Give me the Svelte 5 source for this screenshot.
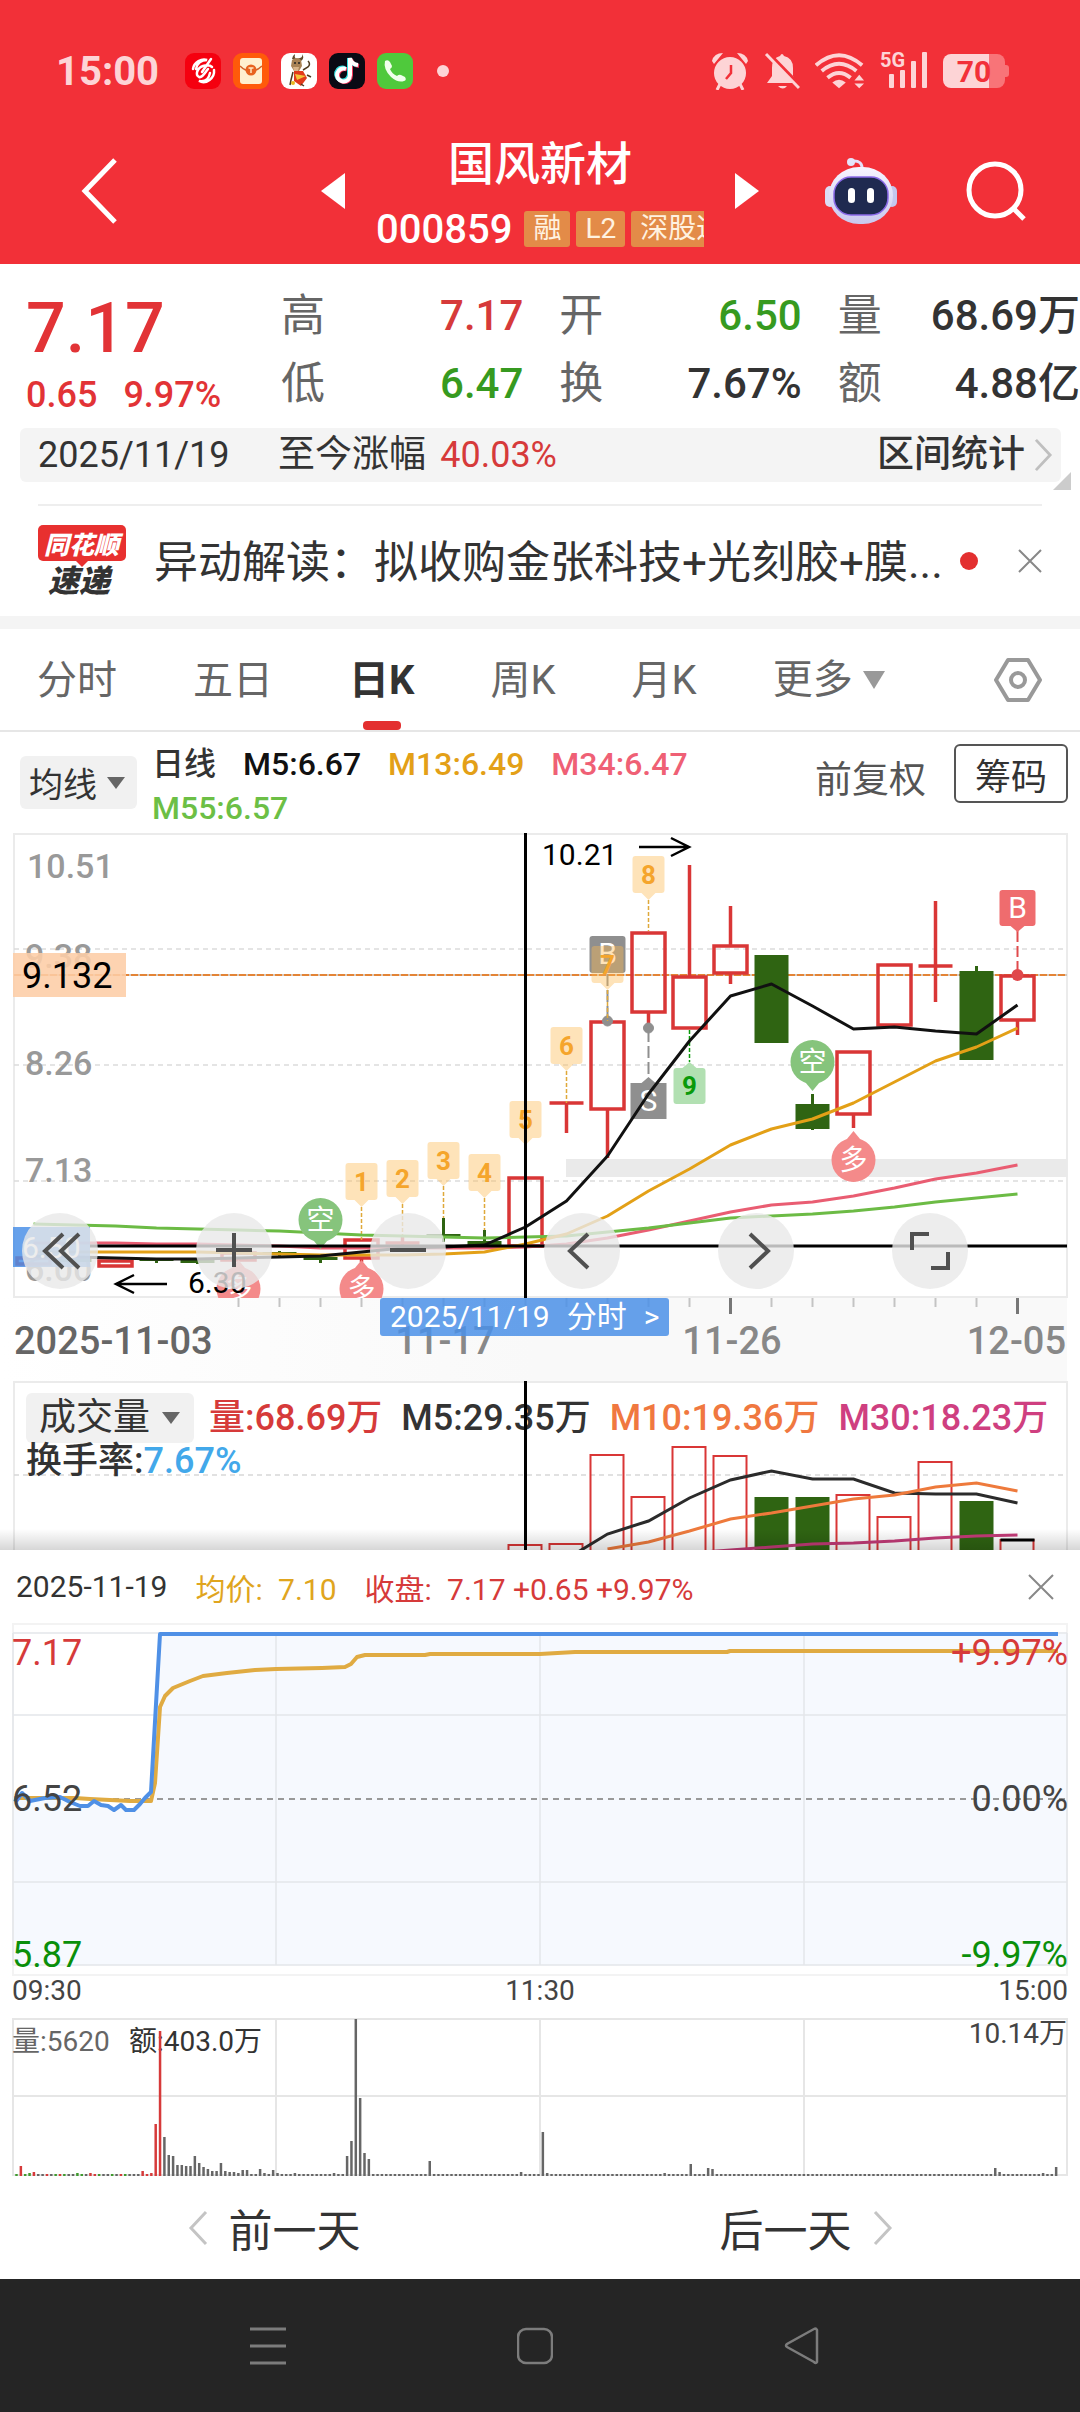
<script>
  const quotes = [
    { label: '高', value: '7.17', tone: 'up' },
    { label: '开', value: '6.50', tone: 'down' },
    { label: '量', value: '68.69万', tone: '' },
    { label: '低', value: '6.47', tone: 'down' },
    { label: '换', value: '7.67%', tone: '' },
    { label: '额', value: '4.88亿', tone: '' }
  ];

  const tabs = ['分时', '五日', '日K', '周K', '月K'];
  let activeTab = $state('日K');

  // Horizontal centre of the candle that is k days from the selected one.
  const cx = (k) => 525.5 + 41 * k;
  const join = (pts) => pts.map((p) => p.join(',')).join(' ');
  const series = (from, ys) => join(ys.map((y, i) => [cx(from + i), y]));

  // k: day offset, t/b: body top and bottom, h/l: wick ends
  const candles = [
    { k: -12, up: true, t: 1258, b: 1264, h: 1258, l: 1264 },
    { k: -11, up: false, t: 1259, b: 1262, h: 1259, l: 1262 },
    { k: -10, up: true, t: 1261, b: 1266, h: 1261, l: 1266 },
    { k: -9, up: false, t: 1259, b: 1261, h: 1259, l: 1263 },
    { k: -8, up: false, t: 1260, b: 1263, h: 1259, l: 1264 },
    { k: -7, up: true, t: 1253, b: 1260, h: 1253, l: 1260 },
    { k: -6, up: false, t: 1252, b: 1254, h: 1251, l: 1256 },
    { k: -5, up: false, t: 1257, b: 1260, h: 1255, l: 1263 },
    { k: -4, up: true, t: 1240, b: 1258, h: 1240, l: 1262 },
    { k: -3, up: true, t: 1243, b: 1246, h: 1237, l: 1246 },
    { k: -2, up: false, t: 1234, b: 1236, h: 1218, l: 1242 },
    { k: -1, up: false, t: 1241, b: 1245, h: 1230, l: 1245 },
    { k: 0, up: true, t: 1178, b: 1246, h: 1178, l: 1246 },
    { k: 1, up: true, t: 1103, b: 1103, h: 1103, l: 1133 },
    { k: 2, up: true, t: 1022, b: 1109, h: 1022, l: 1158 },
    { k: 3, up: true, t: 933, b: 1012, h: 933, l: 1027 },
    { k: 4, up: true, t: 977, b: 1028, h: 865, l: 1028 },
    { k: 5, up: true, t: 946, b: 973, h: 906, l: 984 },
    { k: 6, up: false, t: 955, b: 1043, h: 955, l: 1043 },
    { k: 7, up: false, t: 1104, b: 1129, h: 1094, l: 1130 },
    { k: 8, up: true, t: 1052, b: 1114, h: 1052, l: 1128 },
    { k: 9, up: true, t: 965, b: 1025, h: 965, l: 1025 },
    { k: 10, up: true, t: 966, b: 966, h: 901, l: 1002 },
    { k: 11, up: false, t: 971, b: 1060, h: 966, l: 1060 },
    { k: 12, up: true, t: 976, b: 1020, h: 976, l: 1035 }
  ];

  const ma5 = series(-12, [1256, 1257, 1258, 1259, 1259, 1258, 1257, 1256, 1252, 1248, 1247, 1245, 1227, 1201, 1156, 1094, 1041, 996, 984, 1006, 1029, 1027, 1031, 1034, 1005]);
  const ma13 = series(-12, [1252, 1252, 1252, 1252, 1252, 1253, 1254, 1255, 1255, 1255, 1254, 1252, 1244, 1234, 1216, 1191, 1169, 1145, 1129, 1119, 1103, 1082, 1061, 1047, 1028]);
  const ma34 = series(-12, [1243, 1243, 1243, 1244, 1244, 1245, 1246, 1248, 1248, 1248, 1248, 1248, 1247, 1244, 1238, 1230, 1221, 1212, 1205, 1202, 1196, 1188, 1179, 1173, 1165]);
  const ma55 = series(-12, [1224, 1225, 1226, 1228, 1229, 1230, 1231, 1233, 1235, 1236, 1237, 1238, 1237, 1236, 1232, 1228, 1223, 1218, 1216, 1214, 1211, 1207, 1202, 1198, 1194]);

  const counts = [
    { n: 1, k: -4, y: 1163, end: 1240 },
    { n: 2, k: -3, y: 1160, end: 1237 },
    { n: 3, k: -2, y: 1142, end: 1218 },
    { n: 4, k: -1, y: 1154, end: 1230 },
    { n: 5, k: 0, y: 1101, end: 1177 },
    { n: 6, k: 1, y: 1027, end: 1103 },
    { n: 7, k: 2, y: 946, end: 1021 },
    { n: 8, k: 3, y: 856, end: 931 }
  ];
  const longs = [{ k: -7, y: 1289 }, { k: -4, y: 1289 }, { k: 8, y: 1160 }];
  const shorts = [{ k: -5, y: 1220 }, { k: 7, y: 1062 }];
  const scale = [['10.51', 878, 27], ['9.38', 968, 25], ['8.26', 1075, 25], ['7.13', 1182, 25], ['6.00', 1281, 25]];

  const volumes = [
    [0, 1545, 1], [1, 1544, 1], [2, 1455, 1], [3, 1497, 1], [4, 1447, 1], [5, 1456, 1], [6, 1497, 0],
    [7, 1497, 0], [8, 1495, 1], [9, 1517, 1], [10, 1462, 1], [11, 1501, 0], [12, 1540, 1]
  ];
  const vol5 = series(1, [1559, 1534, 1521, 1498, 1480, 1471, 1479, 1479, 1493, 1494, 1494, 1503]);
  const vol10 = series(2, [1549, 1542, 1531, 1519, 1513, 1506, 1499, 1495, 1487, 1483, 1491]);
  const vol30 = series(4, [1553, 1550, 1547, 1544, 1543, 1541, 1538, 1536, 1535]);

  const price = join([
    [14, 1799], [17, 1800], [22, 1793], [30, 1801], [45, 1798], [60, 1797], [70, 1802], [80, 1806], [88, 1806],
    [94, 1801], [101, 1805], [108, 1806], [114, 1810], [121, 1805], [126, 1810], [134, 1810], [140, 1804],
    [145, 1798], [151, 1792], [160, 1634], [1058, 1634]
  ]);
  const average = join([
    [14, 1798], [75, 1798], [90, 1799], [110, 1800], [130, 1801], [151, 1801], [155, 1783], [160, 1707],
    [165, 1696], [173, 1688], [190, 1681], [203, 1676], [227, 1673], [255, 1670], [276, 1669], [322, 1668],
    [345, 1667], [351, 1664], [357, 1657], [365, 1655], [425, 1655], [430, 1654], [540, 1654], [575, 1652],
    [727, 1652], [730, 1651], [1058, 1651]
  ]);

  // Minute volumes; every minute without an entry trades at the floor height.
  const peaks = {
    1: 10, 3: 3, 4: 4, 14: 3, 17: 3, 29: 5, 31: 3, 32: 52, 33: 145, 34: 39, 35: 21, 36: 20, 37: 11, 38: 11, 39: 10,
    40: 10, 41: 20, 42: 13, 43: 9, 44: 7, 45: 5, 46: 5, 47: 13, 48: 5, 49: 4, 50: 4, 51: 3, 52: 6, 53: 6, 56: 7,
    57: 3, 59: 6, 60: 3, 64: 3, 73: 3, 76: 20, 77: 35, 78: 157, 79: 78, 80: 23, 81: 17, 95: 15, 116: 4, 121: 44,
    122: 3, 149: 3, 155: 12, 159: 8, 160: 7, 225: 8, 226: 4, 236: 3, 239: 9
  };
  const reds = [1, 4, 7, 10, 17, 18, 24, 29, 30, 31, 32, 33];
  const greens = [0, 2, 3, 9, 11, 14, 15, 19, 22, 25];
  const minutes = Array.from({ length: 240 }, (_, i) => ({
    x: 16.5 + 4.35 * i,
    h: peaks[i] ?? 2,
    color: reds.includes(i) ? '#d63a3a' : greens.includes(i) ? '#3f9a2e' : '#666'
  }));
</script>

{#snippet chevron(dir, w, h, color, sw)}
  <svg class="icon" width={w} height={h} viewBox="0 0 20 36" aria-hidden="true">
    <path d={dir === 'left' ? 'M18 2 3 18l15 16' : 'M2 2l15 16L2 34'} fill="none" stroke={color} stroke-width={sw} />
  </svg>
{/snippet}

<div class="page">
  <header>
    <div class="status">
      <span class="clock">15:00</span>
      <div class="apps">
        <svg viewBox="0 0 36 36"><rect width="36" height="36" rx="9" fill="#f5000f" /><path d="M27 14c-2-2-6-2-9-1-6 2-8 9-4 11 3 1 5-3 9-8M8 16C9 9 17 5 22 7c-6 0-10 4-11 9M29 17c1 8-8 15-15 11 8 1 10-3 11-8M26 6 17 19" fill="none" stroke="#fff" stroke-width="2.500" stroke-linecap="round" /></svg>
        <svg viewBox="0 0 36 36"><rect width="36" height="36" rx="9" fill="#ff5a0a" /><rect x="7" y="5" width="22" height="26" rx="3" fill="#fff0cf" /><path d="M7 13q5 5 11 5t11-5" fill="none" stroke="#d2622a" stroke-width="1.5" /><circle cx="18" cy="17" r="5.5" fill="#e8631f" /><path d="M15.500 15h5M18 15v5" stroke="#ffe6c0" stroke-width="1.500" /></svg>
        <svg viewBox="0 0 36 36"><rect width="36" height="36" rx="9" fill="#fff" /><path d="M11 6q0-3 3-5-1 3 1 5l4-1q3-1 2-4 3 4-1 7z" fill="#5f4a2c" /><path d="M11 7q5-4 9 0l1 6-3 5h-5l-3-5z" fill="#a88255" /><path d="M12 14h6l-1 4h-4z" fill="#d8b48a" /><circle cx="14" cy="10" r="1" fill="#222" /><circle cx="18" cy="10" r="1" fill="#222" /><path d="M13 18h9l4 7-6 8-7-5z" fill="#e23a1c" /><path d="M14 21l11 2-9 4z" fill="#f5c53a" /><path d="M22 17l5-3q3-3 0-6M12 19l-2 8-1 5M26 22l4 2M20 31l3 2" stroke="#4d3a20" stroke-width="1.500" fill="none" /><circle cx="12" cy="30" r="2" fill="#e8b820" /></svg>
        <svg viewBox="0 0 36 36"><rect width="36" height="36" rx="9" fill="#0a0a14" /><g fill="none" stroke-width="4"><path d="M18 16.500a6.500 6.500 0 1 0 4 6V6q1 6 8 7" stroke="#f2345a" /><path d="M16 15a6.500 6.500 0 1 0 4 6V5q1 6 8 7" stroke="#35dfe0" /><path d="M17 16a6.500 6.500 0 1 0 4 6V5q1 6 8 7" stroke="#fff" /></g></svg>
        <svg viewBox="0 0 36 36"><rect width="36" height="36" rx="9" fill="#4fc93c" /><path d="M8 8q3-2 5 1l2 4q0 2-2 3 2 5 7 7 2-2 4-1l4 2q2 3-1 4-6 2-13-4Q6 16 8 8z" fill="#f0ffec" /></svg>
      </div>
      <i class="more-dot"></i>
      <div class="signals">
        <svg class="alarm" viewBox="0 0 38 38"><g fill="#fdd4d6"><circle cx="19" cy="21" r="16" /><path d="M1 9Q3 1 12 1L3 12zM37 9Q35 1 26 1l9 11z" /><path d="M9 32l-3 6M29 32l3 6" stroke="#fdd4d6" stroke-width="3" /></g><path d="M20 13v8l-5 6" fill="none" stroke="#f23038" stroke-width="2.500" /></svg>
        <svg class="bell" viewBox="0 0 36 38"><path d="M16 4q2-4 4 0 9 2 9 12v8l4 7H3l5-7v-8Q8 6 16 4zM14 34h9q-4 5-9 0z" fill="#fdd4d6" /><path d="M4 1l33 34" stroke="#f23038" stroke-width="4" /><path d="M2 2l33 34" stroke="#fdd4d6" stroke-width="3" /></svg>
        <svg class="wifi" viewBox="0 0 52 38"><g fill="none" stroke="#fdd4d6" stroke-width="4"><path d="M1 13q24-21 48 0M7 19q18-15 36 0M13 26q12-10 24 0" /></g><path d="M18 31q7-6 14 0l-7 6z" fill="#fdd4d6" /><path d="M46 23l5 6H41zM46 37l5-5H41z" fill="#fdd4d6" /></svg>
        <div class="cell">
          <small>5G</small>
          <svg viewBox="0 0 40 36"><g fill="#fdd4d6"><rect x="0" y="22" width="5" height="14" rx="1" /><rect x="11" y="18" width="5" height="18" rx="1" /><rect x="22" y="9" width="5" height="27" rx="1" /><rect x="33" y="0" width="5" height="36" rx="1" /></g></svg>
        </div>
        <span class="battery">70</span>
      </div>
    </div>

    <div class="topbar">
      <button class="back" aria-label="返回"><svg class="icon" width="36" height="66" viewBox="0 0 36 66"><path d="M34 2 4 33l30 31" fill="none" stroke="#fff" stroke-width="5" /></svg></button>
      <div class="switcher">
        <button aria-label="上一只"><svg class="icon" width="24" height="36" viewBox="0 0 24 36"><path d="M24 0v36L0 18z" fill="#fff" /></svg></button>
        <div class="stock">
          <h1>国风新材</h1>
          <div class="code"><b>000859</b><span>融</span><span>L2</span><span>深股通</span></div>
        </div>
        <button aria-label="下一只"><svg class="icon" width="24" height="36" viewBox="0 0 24 36"><path d="M0 0v36l24-18z" fill="#fff" /></svg></button>
      </div>
      <div class="tools">
        <button aria-label="智能助手">
          <svg class="icon" width="72" height="68" viewBox="0 0 72 68"><defs><linearGradient id="shell" x1="0" y1="0" x2="0" y2="1"><stop offset="0" stop-color="#f7f4ff" /><stop offset="1" stop-color="#c9c8ee" /></linearGradient></defs><path d="M27 4q11-1 10 9" fill="none" stroke="#e4e0fa" stroke-width="3" /><circle cx="26" cy="5" r="4" fill="#e4e4fa" /><rect x="0" y="29" width="10" height="21" rx="5" fill="#dcdcf5" /><rect x="62" y="29" width="10" height="21" rx="5" fill="#c4c6ee" /><rect x="4" y="10" width="64" height="57" rx="30" fill="url(#shell)" /><rect x="9" y="20" width="54" height="38" rx="17" fill="#1f2a50" stroke="#8a6ae8" stroke-width="1.500" /><rect x="23" y="31" width="7" height="15" rx="3.500" fill="#fff" /><rect x="42" y="31" width="7" height="15" rx="3.500" fill="#fff" /></svg>
        </button>
        <button aria-label="搜索"><svg class="icon" width="60" height="60" viewBox="0 0 60 60"><circle cx="29" cy="29" r="26" fill="none" stroke="#fff" stroke-width="5" /><path d="M47 47l11 11" stroke="#fff" stroke-width="5" /></svg></button>
      </div>
    </div>
  </header>

  <section class="quote">
    <div class="last">
      <strong>7.17</strong>
      <p><span>0.65</span><span>9.97%</span></p>
    </div>
    <dl>
      {#each quotes as q}
        <div><dt>{q.label}</dt><dd class={q.tone}>{q.value}</dd></div>
      {/each}
    </dl>
  </section>

  <div class="since">
    <span class="day">2025/11/19</span>
    <span>至今涨幅 <em>40.03%</em></span>
    <a href="#range">区间统计{@render chevron('right', 19, 34, '#bfbfbf', 3)}</a>
  </div>

  <section class="news">
    <div class="logo"><b>同花顺</b><i>速递</i></div>
    <a href="#news">异动解读：拟收购金张科技+光刻胶+膜...</a>
    <span class="unread"></span>
    <button aria-label="关闭"><svg class="icon" width="24" height="24" viewBox="0 0 24 24"><path d="M1 1l22 22M23 1L1 23" stroke="#888" stroke-width="2" /></svg></button>
  </section>

  <nav class="tabs">
    {#each tabs as t}
      <button class:active={t === activeTab} onclick={() => (activeTab = t)}>{t}</button>
    {/each}
    <button class="more">更多<svg class="icon" width="22" height="18" viewBox="0 0 22 18"><path d="M0 0h22L11 18z" fill="#999" /></svg></button>
    <button class="gear" aria-label="设置"><svg class="icon" width="48" height="46" viewBox="0 0 48 46"><path d="M14 3h20l12 20-12 20H14L2 23z" fill="none" stroke="#999" stroke-width="4" stroke-linejoin="round" /><circle cx="24" cy="23" r="7" fill="none" stroke="#999" stroke-width="4" /></svg></button>
  </nav>

  <section class="indicator">
    <button class="pick">均线<svg class="icon" width="18" height="12" viewBox="0 0 18 12"><path d="M0 0h18L9 12z" fill="#666" /></svg></button>
    <div class="legend">
      <span class="name">日线</span><span class="k">M5:6.67</span><span class="o">M13:6.49</span><span class="p">M34:6.47</span><span class="g">M55:6.57</span>
    </div>
    <button class="adjust">前复权</button>
    <button class="chips">筹码</button>
  </section>

  <section class="kline">
    <svg class="chart" viewBox="0 833 1080 548" role="img" aria-label="日K线图">
      <defs>
        <clipPath id="frame"><rect x="13" y="833" width="1055" height="465" /></clipPath>
        <linearGradient id="haze"><stop offset="0" stop-color="#fff" /><stop offset="0.500" stop-color="#f9f9f9" /></linearGradient>
      </defs>
      <rect x="0" y="1298" width="1067" height="83" fill="url(#haze)" />
      <rect x="14" y="834" width="1053" height="463" fill="#fff" stroke="#ebebeb" stroke-width="2" />
      <g stroke="#dcdcdc" stroke-width="1.500" stroke-dasharray="5 4"><path d="M14 949h1053M14 1065h1053M14 1181h1053" /></g>
      <g class="axis">
        {#each scale as [t, y, x]}<text {x} {y}>{t}</text>{/each}
      </g>
      <rect x="566" y="1159" width="501" height="18" fill="#eaeaea" />
      <path d="M14 975h1053" stroke="#c9b8a8" stroke-width="1.500" />
      <path d="M14 975h1053" stroke="#e38436" stroke-width="2" stroke-dasharray="7 2" />
      <g clip-path="url(#frame)">
        {#each candles as c}
          {#if c.up}
            <g fill="none" stroke="#d93636" stroke-width="3.500">
              {#if c.b - c.t < 4}
                <path d="M{cx(c.k) - 17} {c.t}h34" />
                <path d="M{cx(c.k)} {c.h}V{c.l}" />
              {:else}
                <rect x={cx(c.k) - 16.5} y={c.t} width="33" height={c.b - c.t} />
                <path d="M{cx(c.k)} {c.h}V{c.t}M{cx(c.k)} {c.b}V{c.l}" />
              {/if}
            </g>
          {:else}
            <rect x={cx(c.k) - 17} y={c.t} width="34" height={c.b - c.t} fill="#2f6412" />
            <path d="M{cx(c.k)} {c.h}V{c.l}" stroke="#2f6412" stroke-width="3" />
          {/if}
        {/each}

        <g stroke="#8f8f8f" fill="#8f8f8f">
          <path d="M{cx(2)} 974v46M{cx(3)} 1030v48" fill="none" stroke-width="2" stroke-dasharray="12 4" />
          <circle cx={cx(2)} cy="1021" r="5" /><circle cx={cx(3)} cy="1028" r="5" />
        </g>
        <g class="trade">
          <rect x={cx(2) - 18} y="936" width="36" height="37" rx="3" fill="#8f8f8f" /><text x={cx(2)} y="964">B</text>
          <path d="M{cx(3) - 18} 1083h11l7-6 7 6h11v36h-36z" fill="#8f8f8f" /><text x={cx(3)} y="1111">S</text>
        </g>
        {#each counts as c}
          <path d="M{cx(c.k)} {c.y + 44}V{c.end}" stroke="#dfa93a" stroke-width="1.500" stroke-dasharray="4 2" />
          <g class="count">
            <path d="M{cx(c.k) - 13} {c.y}h26q3 0 3 3v31q0 3-3 3h-6l-7 7-7-7h-6q-3 0-3-3v-31q0-3 3-3z" fill="#fdb850" fill-opacity="0.4" />
            <text x={cx(c.k)} y={c.y + 28}>{c.n}</text>
          </g>
        {/each}
        <path d="M{cx(4)} 1030v32" stroke="#0a9a0a" stroke-width="1.500" stroke-dasharray="4 2" />
        <g class="count nine"><path d="M{cx(4) - 13} 1068h6l7-6 7 6h6q3 0 3 3v30q0 3-3 3h-26q-3 0-3-3v-30q0-3 3-3z" fill="#b2e0b2" /><text x={cx(4)} y="1095">9</text></g>

        <g fill="none" stroke-width="3" stroke-linejoin="round">
          <polyline points={ma34} stroke="#e95d72" /><polyline points={ma55} stroke="#6cbb45" />
          <polyline points={ma13} stroke="#e3a017" /><polyline points={ma5} stroke="#111" />
        </g>

        <path d="M{cx(12)} 931v40" stroke="#e04a4c" stroke-width="2" stroke-dasharray="11 4" />
        <circle cx={cx(12)} cy="975" r="6" fill="#e0484b" />
        <g class="trade"><path d="M{cx(12) - 15} 890h30q3 0 3 3v30q0 3-3 3h-8l-7 6-7-6h-8q-3 0-3-3v-30q0-3 3-3z" fill="#ef6c6e" /><text x={cx(12)} y="918">B</text></g>

        <g class="flag">
          {#each shorts as s}
            <path d="M{cx(s.k) - 9} {s.y + 18}h18l-9 11z" fill="#86c47c" /><circle cx={cx(s.k)} cy={s.y} r="22" fill="#86c47c" /><text x={cx(s.k)} y={s.y + 10}>空</text>
          {/each}
          {#each longs as s}
            <path d="M{cx(s.k) - 9} {s.y - 18}h18l-9-11z" fill="#f48a8a" /><circle cx={cx(s.k)} cy={s.y} r="22" fill="#f48a8a" /><text x={cx(s.k)} y={s.y + 10}>多</text>
          {/each}
        </g>
      </g>

      <rect x="13" y="953" width="113" height="44" fill="#fdcda6" fill-opacity="0.88" />
      <text class="price" x="22" y="988">9.132</text>
      <rect x="13" y="1227" width="77" height="40" fill="#4b90e8" fill-opacity="0.85" />
      <text class="note" x="22" y="1258" fill="#fff">6.50</text>
      <path d="M90 1246h977" stroke="#000" stroke-width="3" />
      <path d="M525.5 833v465" stroke="#000" stroke-width="3" />
      <g fill="none" stroke="#000" stroke-width="2.500"><path d="M167 1284h-51m18-9-18 9 18 9M639 847h50m-18-9 18 9-18 9" /></g>
      <text class="note" x="188" y="1293">6.30</text>
      <text class="note" x="542" y="865">10.21</text>

      <g stroke="#c4c4c4" stroke-width="2">
        {#each Array.from({ length: 20 }, (_, i) => i - 7) as k}<path d="M{cx(k)} 1298v9" />{/each}
      </g>
      <path d="M{cx(5)} 1298v16M{cx(12)} 1298v16" stroke="#777" stroke-width="3" />
      <g class="dates">
        <text x="14" y="1354" fill="#666">2025-11-03</text>
        <text x="445" y="1354" text-anchor="middle">11-17</text>
        <text x="732" y="1354" text-anchor="middle">11-26</text>
        <text x="1066" y="1354" text-anchor="end">12-05</text>
      </g>
    </svg>
    <button class="jump"><span>2025/11/19</span><span>分时</span><span>&gt;</span></button>
    <div class="pad">
      <button aria-label="最左"><svg viewBox="0 0 76 76"><path d="M41 21 23 38l18 17M57 21 39 38l18 17" /></svg></button>
      <button aria-label="放大"><svg viewBox="0 0 76 76"><path d="M38 20v34M20 37h36" /></svg></button>
      <button aria-label="缩小"><svg viewBox="0 0 76 76"><path d="M20 37h36" /></svg></button>
      <button aria-label="左移"><svg viewBox="0 0 76 76"><path d="M44 21 26 38l18 17" /></svg></button>
      <button aria-label="右移"><svg viewBox="0 0 76 76"><path d="M32 21l18 17-18 17" /></svg></button>
      <button aria-label="全屏"><svg viewBox="0 0 76 76"><path d="M20 37V21h17M56 39v16H39" /></svg></button>
    </div>
  </section>

  <section class="volume">
    <svg class="chart" viewBox="0 1381 1080 169" role="img" aria-label="成交量">
      <defs><linearGradient id="shade" x1="0" y1="0" x2="0" y2="1"><stop offset="0" stop-color="#000" stop-opacity="0" /><stop offset="1" stop-color="#000" stop-opacity="0.16" /></linearGradient></defs>
      <path d="M14 1560V1382h1053v178" fill="none" stroke="#ebebeb" stroke-width="2" />
      <path d="M14 1475h1053" stroke="#d8d8d8" stroke-width="1.500" stroke-dasharray="5 4" />
      {#each volumes as [k, y, up]}
        {#if up}
          <rect x={cx(k) - 17} {y} width="33" height="120" fill="none" stroke="#d93636" stroke-width="2" />
        {:else}
          <rect x={cx(k) - 17} {y} width="34" height="120" fill="#2f6412" />
        {/if}
      {/each}
      <path d="M{cx(12) - 17} 1540h34" stroke="#000" stroke-width="3" />
      <g fill="none" stroke-width="3">
        <polyline points={vol5} stroke="#2b2b2b" /><polyline points={vol10} stroke="#ee7a3c" /><polyline points={vol30} stroke="#c43b78" />
      </g>
      <rect x="0" y="1529" width="1080" height="21" fill="url(#shade)" />
    </svg>
    <div class="vlegend">
      <div>
        <button class="pick">成交量<svg class="icon" width="18" height="12" viewBox="0 0 18 12"><path d="M0 0h18L9 12z" fill="#666" /></svg></button>
        <span class="up">量:68.69万</span><span>M5:29.35万</span><span class="or">M10:19.36万</span><span class="mg">M30:18.23万</span>
      </div>
      <p>换手率:<span class="bl">7.67%</span></p>
    </div>
    <svg class="chart cross" viewBox="0 1381 1080 169" aria-hidden="true"><path d="M525.5 1381v169" stroke="#000" stroke-width="3" /></svg>
  </section>

  <section class="sheet">
    <div class="sum">
      <span>2025-11-19</span>
      <span class="avg">均价:&ensp;7.10</span>
      <span class="up">收盘:&ensp;7.17 +0.65 +9.97%</span>
      <button aria-label="关闭分时"><svg class="icon" width="26" height="26" viewBox="0 0 26 26"><path d="M1 1l24 24M25 1L1 25" stroke="#888" stroke-width="2" /></svg></button>
    </div>
    <svg class="chart" viewBox="0 1623 1080 395" role="img" aria-label="分时走势">
      <rect x="13" y="1624" width="1054" height="351" fill="none" stroke="#f3f3f3" stroke-width="2" />
      <polygon points="{price} 1066,1634 1066,1965 14,1965" fill="#f6f9fe" />
      <g fill="none" stroke="#e4e6ea" stroke-width="1.500"><path d="M13 1633h1054M13 1715h1054M13 1882h1054M13 1965h1054M276 1633v332M540 1633v332M804 1633v332M13 1633v332M1067 1633v332" /></g>
      <path d="M14 1799h1053" stroke="#999" stroke-width="2" stroke-dasharray="6 5" />
      <g fill="none" stroke-width="4" stroke-linejoin="round"><polyline points={average} stroke="#e0ab42" /><polyline points={price} stroke="#4f90e6" /></g>
      <g class="lab">
        <text x="12" y="1665" fill="#d63a3a">7.17</text><text x="12" y="1811">6.52</text><text x="12" y="1967" fill="#0a8f0a">5.87</text>
        <g text-anchor="end"><text x="1068" y="1665" fill="#d63a3a">+9.97%</text><text x="1068" y="1811">0.00%</text><text x="1068" y="1967" fill="#0a8f0a">-9.97%</text></g>
      </g>
      <g class="time"><text x="12" y="2000">09:30</text><text x="540" y="2000" text-anchor="middle">11:30</text><text x="1068" y="2000" text-anchor="end">15:00</text></g>
    </svg>
    <svg class="chart" viewBox="0 2018 1080 158" role="img" aria-label="分时成交量">
      <g fill="none" stroke="#e6e6e6" stroke-width="2"><path d="M13 2019h1054v156H13zM13 2096h1054M276 2019v156M540 2019v156M804 2019v156" /></g>
      <g class="time">
        <text x="12" y="2051" fill="#666">量:5620</text><text x="129" y="2051" fill="#333">额:403.0万</text>
        <text x="1067" y="2043" text-anchor="end">10.14万</text>
      </g>
      {#each minutes as m}<path d="M{m.x} 2176v-{m.h}" stroke={m.color} stroke-width="2.500" />{/each}
    </svg>
    <div class="days">
      <button>{@render chevron('left', 20, 36, '#c4c4c4', 3)}前一天</button>
      <button>后一天{@render chevron('right', 20, 36, '#c4c4c4', 3)}</button>
    </div>
  </section>

  <footer>
    <button aria-label="菜单"><svg class="icon" width="36" height="38" viewBox="0 0 36 38"><path d="M0 2h36M0 19h36M0 36h36" stroke="#7c7c7c" stroke-width="3" /></svg></button>
    <button aria-label="主页"><svg class="icon" width="36" height="38" viewBox="0 0 36 38"><rect x="1" y="2" width="34" height="34" rx="8" fill="none" stroke="#7c7c7c" stroke-width="2.500" /></svg></button>
    <button aria-label="后退"><svg class="icon" width="36" height="38" viewBox="0 0 36 38"><path d="M33 3v32q-1 2-3 0L3 20q-2-1 0-3L30 2q2-1 3 1z" fill="none" stroke="#7c7c7c" stroke-width="2.500" /></svg></button>
  </footer>
</div>

<style>
  :global(body) { background: #fff; }
  .page {
    font-family: Roboto, 'Noto Sans CJK SC', sans-serif;
    color: #333;
    overflow: hidden;
  }
  button {
    font: inherit;
    color: inherit;
    background: none;
    border: 0;
    padding: 0;
    cursor: pointer;
    flex: none;
  }
  a { color: inherit; text-decoration: none; }
  h1, p, dl, dd { margin: 0; }
  .icon { display: block; flex: none; }
  .chart { display: block; width: 100%; height: auto; }
  .up { color: #d63a3a; }
  .down { color: #369a20; }

  header { background: #f23038; color: #fff; }
  .status {
    display: flex;
    align-items: center;
    height: 126px;
    padding: 8px 75px 0 56px;
    color: #fdd4d6;
  }
  .clock { font-size: 40px; font-weight: 700; width: 129px; }
  .apps { display: flex; gap: 12px; }
  .apps svg { width: 36px; height: 36px; }
  .more-dot { width: 12px; height: 12px; margin-left: 24px; border-radius: 50%; background: #fdd4d6; }
  .signals { display: flex; align-items: center; gap: 15px; margin-left: auto; }
  .alarm { width: 38px; height: 38px; }
  .bell { width: 36px; height: 38px; }
  .wifi { width: 50px; height: 38px; }
  .cell { display: flex; width: 48px; height: 38px; }
  .cell small { font-size: 20px; line-height: 16px; font-weight: 700; width: 9px; }
  .cell svg { width: 40px; height: 36px; flex: none; }
  .battery {
    position: relative;
    width: 62px;
    height: 34px;
    border-radius: 8px;
    background: linear-gradient(90deg, #fdd4d6 46px, #f87478 46px);
    color: #f23038;
    font-size: 30px;
    line-height: 36px;
    font-weight: 700;
    text-align: center;
  }
  .battery::after {
    content: '';
    position: absolute;
    right: -4px;
    top: 11px;
    width: 4px;
    height: 12px;
    border-radius: 0 3px 3px 0;
    background: #f87478;
  }
  .topbar { display: flex; align-items: flex-start; padding: 0 54px 0 81px; }
  .topbar button { height: 114px; }
  .switcher { display: flex; gap: 31px; margin: 0 66px 0 auto; }
  .stock { width: 328px; text-align: center; }
  h1 { font-size: 46px; line-height: 60px; font-weight: 500; }
  .code { display: flex; align-items: center; gap: 6px; height: 70px; overflow: hidden; }
  .code b { font-size: 40px; font-weight: 500; margin-right: 6px; }
  .code span {
    flex: none;
    padding: 0 9px;
    border-radius: 3px;
    background: #e38b48;
    color: #fff2e0;
    font-size: 28px;
    line-height: 36px;
  }
  .tools { display: flex; gap: 69px; }

  .quote { display: flex; padding-top: 18px; height: 146px; }
  .last { width: 255px; padding-left: 26px; color: #e23336; flex: none; }
  .last strong { display: block; font-size: 70px; line-height: 92px; font-weight: 500; }
  .last p { display: flex; gap: 26px; font-size: 36px; line-height: 42px; font-weight: 500; }
  dl { flex: 1; display: grid; grid-template-columns: repeat(3, 1fr); column-gap: 36px; grid-auto-rows: 68px; }
  dl div { display: flex; justify-content: space-between; align-items: center; line-height: 68px; }
  dt { font-size: 44px; color: #666; }
  dd { font-size: 42px; font-weight: 500; }

  .since {
    display: flex;
    align-items: center;
    height: 54px;
    margin: 0 19px 0 20px;
    padding: 0 8px 0 18px;
    border-radius: 6px;
    background: #f4f4f4;
    font-size: 37px;
    line-height: 54px;
    position: relative;
  }
  .since::after {
    content: '';
    position: absolute;
    right: -10px;
    bottom: -8px;
    border: 9px solid transparent;
    border-right-color: #ccc;
    border-bottom-color: #ccc;
  }
  .day { width: 240px; font-size: 36px; }
  .since em { margin-left: 5px; font-style: normal; font-size: 36px; color: #d63a3a; }
  .since a { display: flex; align-items: center; gap: 9px; margin-left: auto; font-weight: 500; }

  .news {
    display: flex;
    align-items: center;
    height: 110px;
    margin: 22px 38px 0;
    border-top: 2px solid #eee;
  }
  .logo { width: 116px; flex: none; display: flex; flex-direction: column; align-items: flex-start; font-family: 'Noto Sans CJK SC', sans-serif; }
  .logo b {
    position: relative;
    padding: 0 7px 0 6px;
    background: #e8302f;
    border-radius: 5px;
    color: #fff;
    font-size: 25px;
    line-height: 36px;
    font-weight: 900;
    font-style: italic;
  }
  .logo b::after {
    content: '';
    position: absolute;
    left: 38px;
    top: 36px;
    border: 6px solid transparent;
    border-top-color: #e8302f;
  }
  .logo i { padding-left: 10px; font-size: 31px; line-height: 36px; font-weight: 900; }
  .news a { padding-top: 4px; font-size: 44px; line-height: 60px; white-space: nowrap; }
  .unread { width: 18px; height: 18px; margin-left: auto; margin-right: 40px; border-radius: 50%; background: #e32f2f; }

  .tabs {
    display: flex;
    align-items: stretch;
    height: 101px;
    border-top: 13px solid #f4f4f4;
    border-bottom: 2px solid #e6e6e6;
    padding: 0 38px 0 37px;
    font-size: 40px;
    color: #666;
    gap: 76px;
  }
  .tabs button { position: relative; line-height: 104px; }
  .tabs .active { color: #333; font-weight: 700; }
  .tabs .active::after {
    content: '';
    position: absolute;
    left: 50%;
    bottom: 0;
    width: 38px;
    height: 9px;
    margin-left: -19px;
    border-radius: 4px;
    background: #e32f2f;
  }
  .tabs .more { display: flex; align-items: center; gap: 10px; }
  .tabs .gear { margin-left: auto; }

  .indicator { display: flex; height: 101px; padding: 12px 12px 0 20px; box-sizing: border-box; }
  .pick {
    display: flex;
    align-items: center;
    border-radius: 6px;
    background: #f1f1f1;
  }
  .indicator .pick { height: 53px; margin-top: 12px; padding: 0 12px 0 9px; gap: 10px; font-size: 34px; }
  .legend { display: flex; flex-wrap: wrap; align-content: flex-start; column-gap: 27px; flex: 1; margin: -2px 82px 0 15px; font-size: 32px; line-height: 44px; font-weight: 500; }
  .legend .k { color: #111; }
  .legend .o { color: #e3a017; }
  .legend .p { color: #ef6075; }
  .legend .g { color: #6cbf45; }
  .adjust { height: 66px; margin-right: 28px; font-size: 37px; color: #555; }
  .chips { width: 114px; height: 59px; border: 2px solid #555; border-radius: 6px; font-size: 36px; }

  .kline { position: relative; }
  .axis text { font-size: 34px; font-weight: 500; fill: #999; }
  .price { font-size: 36px; }
  .note { font-size: 30px; }
  .count text { font-size: 26px; font-weight: 700; fill: #f5a52c; text-anchor: middle; }
  .nine text { fill: #0a9a0a; }
  .trade text { font-size: 30px; fill: #fff; text-anchor: middle; }
  .flag text { font-size: 28px; fill: #fff; text-anchor: middle; }
  .dates text { font-size: 38px; font-weight: 500; }
  .dates { fill: #888; }
  .jump {
    position: absolute;
    left: 380px;
    top: 465px;
    display: flex;
    gap: 17px;
    padding: 0 10px;
    border-radius: 3px;
    background: rgba(75, 144, 232, 0.85);
    color: #fff;
    font-size: 30px;
    line-height: 38px;
  }
  .pad {
    position: absolute;
    left: 22px;
    right: 112px;
    top: 380px;
    display: flex;
    justify-content: space-between;
  }
  .pad button { width: 76px; height: 76px; border-radius: 50%; background: rgba(232, 232, 232, 0.8); }
  .pad svg { display: block; fill: none; stroke: #505050; stroke-width: 4; }

  .volume { display: grid; }
  .volume > * { grid-area: 1 / 1; }
  .vlegend { padding: 12px 0 0 26px; font-size: 36px; font-weight: 500; line-height: 50px; z-index: 1; }
  .vlegend div { display: flex; gap: 19px; white-space: nowrap; }
  .vlegend .pick { height: 50px; margin-right: -4px; padding: 0 14px 0 13px; gap: 12px; font-size: 37px; font-weight: 400; }
  .vlegend p { line-height: 36px; }
  .cross { z-index: 2; pointer-events: none; }
  .or { color: #f07840; }
  .mg { color: #cf3f80; }
  .bl { color: #42a8ea; }

  .sum { display: flex; align-items: center; gap: 28px; height: 73px; padding: 0 26px 0 16px; font-size: 30px; white-space: nowrap; }
  .avg { color: #e0a51e; }
  .sum button { margin-left: auto; }
  .lab { fill: #444; }
  .lab text { font-size: 36px; }
  .time { fill: #444; }
  .time text { font-size: 28px; }
  .days { display: flex; height: 103px; padding: 0 8px; }
  .days button { flex: 1; display: flex; align-items: center; justify-content: center; gap: 21px; font-size: 44px; }

  footer { display: flex; justify-content: space-around; align-items: center; height: 133px; padding: 0 144px 0 134px; background: #252525; }
</style>
